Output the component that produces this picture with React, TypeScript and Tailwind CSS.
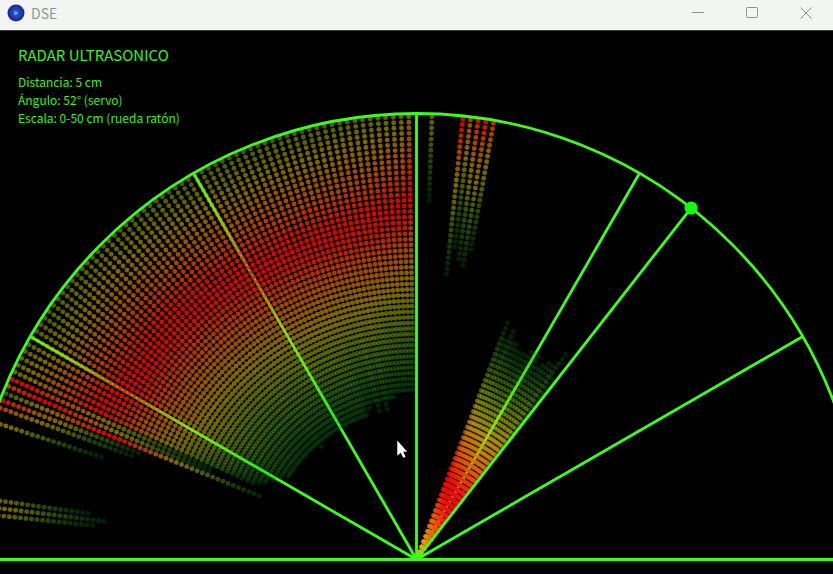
import React from "react";

const CX = 416.5;
const CY = 528.5;
const RADIUS = 446;
const STEP = 5.575;

// A beam fades in from `start` up to its hottest distance and back down to `end`.
type Beam = { angle: number; start: number; rise: number; peak: number; fall: number; end: number };

const point = (angle: number, r: number): [number, number] => {
  const a = (angle * Math.PI) / 180;
  return [CX + r * Math.cos(a), CY - r * Math.sin(a)];
};

const PEAKS: [number, number][] = [
  [91, 364], [92, 352], [95, 345], [103, 335], [118, 330],
  [130, 336], [136, 340], [145, 334], [150, 336], [154, 350], [155, 348],
];

const ODD_STARTS: Record<number, number> = {
  101: 153, 104: 153, 107: 158, 109: 153, 110: 153, 130: 147,
  147: 153, 148: 158, 149: 158, 150: 164, 151: 164, 152: 169, 153: 169, 154: 175, 155: 181,
};

function peakAt(angle: number): number {
  for (let i = 1; i < PEAKS.length; i++) {
    const [a0, p0] = PEAKS[i - 1];
    const [a1, p1] = PEAKS[i];
    if (angle <= a1) return p0 + ((p1 - p0) * (angle - a0)) / (a1 - a0);
  }
  return 348;
}

function startAt(angle: number): number {
  if (ODD_STARTS[angle]) return ODD_STARTS[angle];
  if (angle <= 97) return 169;
  if (angle <= 110) return 164;
  return 153;
}

const FAR_BEAMS: [number, number, number][] = [
  [156, 225, 436], [157, 225, 402], [158, 167, 330], [159, 295, 455], [160, 303, 480], [162, 331, 510],
  [172, 331, 515], [173, 314, 500], [174, 325, 515],
  [88, 359, 530], [84, 287, 446], [83, 315, 480], [82, 303, 460], [81, 298, 455], [80, 314, 470],
];

const NEAR_ENDS = [225, 254, 236, 237, 234, 228, 236, 237, 237, 230, 231, 232, 237, 237, 248, 236, 253];

const BEAMS: Beam[] = [
  ...Array.from({ length: 65 }, (_, i) => {
    const angle = 91 + i;
    const start = startAt(angle);
    const peak = peakAt(angle);
    return { angle, start, rise: peak - start, peak, fall: angle === 91 ? 210 : 178, end: RADIUS };
  }),
  ...FAR_BEAMS.map(([angle, start, peak]) => ({
    angle, start, rise: peak - start, peak, fall: 178, end: RADIUS,
  })),
  ...NEAR_ENDS.map((end, i) => {
    const peak = i === 16 ? 86 : 62 + i;
    return { angle: 53 + i, start: 0, rise: 170, peak, fall: end - peak, end };
  }),
];

// level, red, green, blue, opacity
const RAMP: [number, number, number, number, number][] = [
  [0, 0, 150, 20, 0.22],
  [0.2, 85, 190, 25, 0.34],
  [0.4, 175, 200, 10, 0.46],
  [0.55, 222, 190, 0, 0.55],
  [0.75, 242, 105, 0, 0.67],
  [0.92, 248, 20, 0, 0.8],
  [1, 250, 0, 0, 0.86],
];

function tint(level: number): { fill: string; alpha: number } {
  const t = Math.max(0, Math.min(1, level));
  let i = 1;
  while (i < RAMP.length - 1 && t > RAMP[i][0]) i++;
  const a = RAMP[i - 1];
  const b = RAMP[i];
  const f = (t - a[0]) / (b[0] - a[0]);
  const mix = (k: number) => a[k] + (b[k] - a[k]) * f;
  return {
    fill: `rgb(${Math.round(mix(1))},${Math.round(mix(2))},${Math.round(mix(3))})`,
    alpha: mix(4),
  };
}

function BeamDots({ beam }: { beam: Beam }) {
  const dots: React.ReactElement[] = [];
  for (let k = 0; k < 80; k++) {
    const r = 2.5 + STEP * k;
    if (r < beam.start - 2.5 || r > beam.end + 2.5) continue;
    const [x, y] = point(beam.angle, r);
    if (x < -4) continue;
    const away = r < beam.peak ? (beam.peak - r) / beam.rise : (r - beam.peak) / beam.fall;
    const { fill, alpha } = tint(1 - away);
    dots.push(
      <circle key={k} cx={x.toFixed(2)} cy={y.toFixed(2)} r={2.45} fill={fill} fillOpacity={alpha.toFixed(2)} />,
    );
  }
  return <g>{dots}</g>;
}

function Spoke({ angle }: { angle: number }) {
  const [x, y] = point(angle, RADIUS);
  return <line x1={CX} y1={CY} x2={x} y2={y} />;
}

function Radar() {
  const [tx, ty] = point(52, RADIUS);
  return (
    <svg
      viewBox="0 0 833 543"
      className="col-start-1 row-start-1 block h-auto w-full"
      role="img"
      aria-label="Radar"
    >
      <g stroke="#3cff1e" strokeWidth="2.8" fill="none">
        {[30, 60, 120, 150].map((a) => (
          <Spoke key={a} angle={a} />
        ))}
      </g>
      {BEAMS.map((beam) => (
        <BeamDots key={beam.angle} beam={beam} />
      ))}
      <g stroke="#3cff1e" strokeWidth="2.8" fill="none">
        <path d={`M${CX - RADIUS} ${CY}A${RADIUS} ${RADIUS} 0 0 1 ${CX + RADIUS} ${CY}`} />
        <line x1="0" y1={CY} x2="833" y2={CY} />
        <Spoke angle={90} />
        <Spoke angle={52} />
      </g>
      <circle cx={tx} cy={ty} r="6.5" fill="#14ff0a" />
      <path d="M397.3 409.5v15.2l3.4-3 2.6 5 2.3-1-2.4-5h4z" fill="#fff" />
    </svg>
  );
}

function TitleBar() {
  return (
    <header className="flex h-[30px] items-start justify-between bg-[#f3f5f2]">
      <div className="flex h-[26px] items-center gap-1.5 pl-[7px]">
        <svg viewBox="0 0 18 18" className="size-[18px]" aria-hidden="true">
          <defs>
            <radialGradient id="app-icon">
              <stop offset="0" stopColor="#2f7fe0" />
              <stop offset="0.35" stopColor="#2050b8" />
              <stop offset="1" stopColor="#1c1ca4" />
            </radialGradient>
          </defs>
          <circle cx="9" cy="9" r="8.5" fill="url(#app-icon)" />
          <path d="M7.5 6.8v4.4L11.3 9z" fill="#58b4f0" />
        </svg>
        <h1 className="text-sm text-[#929492]">DSE</h1>
      </div>
      <div className="flex h-[26px] text-[#8f918f]">
        <button type="button" aria-label="Minimizar" className="flex w-[54px] items-center justify-center">
          <svg viewBox="0 0 12 12" className="size-3" fill="none" stroke="currentColor">
            <path d="M0 5.5h12" />
          </svg>
        </button>
        <button type="button" aria-label="Maximizar" className="flex w-[54px] items-center justify-center">
          <svg viewBox="0 0 12 12" className="size-3" fill="none" stroke="currentColor">
            <rect x="0.5" y="0.5" width="11" height="10" rx="1" />
          </svg>
        </button>
        <button type="button" aria-label="Cerrar" className="flex w-[54px] items-center justify-center">
          <svg viewBox="0 0 12 12" className="size-3" fill="none" stroke="currentColor">
            <path d="M0.5 0.5l11 11M11.5 0.5l-11 11" />
          </svg>
        </button>
      </div>
    </header>
  );
}

export default function App() {
  return (
    <div className="min-h-screen overflow-hidden bg-black font-['Noto_Sans_CJK_SC','Noto_Sans',sans-serif]">
      <TitleBar />
      <main className="grid grid-cols-1 border-t border-[#3c3c3c]">
        <Radar />
        <section className="z-10 col-start-1 row-start-1 self-start px-[18px] pt-3 text-[#38f21c]">
          <h2 className="text-[15px] leading-6">RADAR ULTRASONICO</h2>
          <div className="pt-1.5 text-xs leading-[18px]">
            <p>Distancia: 5 cm</p>
            <p>Ángulo: 52° (servo)</p>
            <p>Escala: 0-50 cm (rueda ratón)</p>
          </div>
        </section>
      </main>
    </div>
  );
}
